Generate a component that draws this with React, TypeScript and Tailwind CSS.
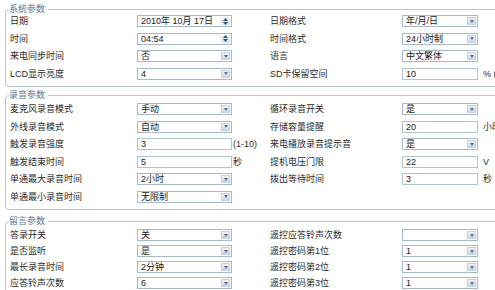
import React from 'react';

type Ctl = { kind: 'select' | 'spin' | 'text'; value: string; suffix?: string };
type Field = { label: string; ctl: Ctl };

const sel = (value: string): Ctl => ({ kind: 'select', value });
const txt = (value: string, suffix?: string): Ctl => ({ kind: 'text', value, suffix });

const sections: { title: string; gap: string; box: string; left: Field[]; right: Field[] }[] = [
    {
        title: '系统参数',
        gap: 'gap-[5.5px]',
        box: 'mt-[4px] pt-[1px] pb-[6.5px]',
        left: [
            { label: '日期', ctl: { kind: 'spin', value: '2010年 10月 17日' } },
            { label: '时间', ctl: { kind: 'spin', value: '04:54' } },
            { label: '来电同步时间', ctl: sel('否') },
            { label: 'LCD显示亮度', ctl: sel('4') },
        ],
        right: [
            { label: '日期格式', ctl: sel('年/月/日') },
            { label: '时间格式', ctl: sel('24小时制') },
            { label: '语言', ctl: sel('中文繁体') },
            { label: 'SD卡保留空间', ctl: txt('10', '% (最大50%)') },
        ],
    },
    {
        title: '录音参数',
        gap: 'gap-[5.5px]',
        box: 'mt-[3px] pt-[3px] pb-[6.5px]',
        left: [
            { label: '麦克风录音模式', ctl: sel('手动') },
            { label: '外线录音模式', ctl: sel('自动') },
            { label: '触发录音强度', ctl: txt('3', '(1-10)') },
            { label: '触发结束时间', ctl: txt('5', '秒') },
            { label: '单通最大录音时间', ctl: sel('2小时') },
            { label: '单通最小录音时间', ctl: sel('无限制') },
        ],
        right: [
            { label: '循环录音开关', ctl: sel('是') },
            { label: '存储容量提醒', ctl: txt('20', '小时') },
            { label: '来电播放录音提示音', ctl: sel('是') },
            { label: '提机电压门限', ctl: txt('22', 'V') },
            { label: '拨出等待时间', ctl: txt('3', '秒') },
        ],
    },
    {
        title: '留言参数',
        gap: 'gap-[4px]',
        box: 'mt-[6px] pt-[3px] pb-[6px]',
        left: [
            { label: '答录开关', ctl: sel('关') },
            { label: '是否监听', ctl: sel('是') },
            { label: '最长录音时间', ctl: sel('2分钟') },
            { label: '应答铃声次数', ctl: sel('6') },
        ],
        right: [
            { label: '遥控应答铃声次数', ctl: sel('') },
            { label: '遥控密码第1位', ctl: sel('1') },
            { label: '遥控密码第2位', ctl: sel('1') },
            { label: '遥控密码第3位', ctl: sel('1') },
        ],
    },
];

function Control({ ctl, width }: { ctl: Ctl; width: string }) {
    const border = ctl.kind === 'text' ? 'border-[#b3c2d0]' : 'border-[#a6b9cc]';
    return (
        <div className={`${width} h-[12px] shrink-0 flex items-stretch bg-white border ${border}`}>
            <span className="flex-1 pl-[3px] leading-[10px] text-[#1a1a1a] whitespace-nowrap overflow-hidden">
                {ctl.value}
            </span>
            {ctl.kind === 'select' && (
                <span className="w-[9px] my-[1px] mr-[1px] flex items-center justify-center bg-gradient-to-b from-[#eef3fa] to-[#c9d8ea] border border-[#c3d2e3]">
                    <svg width="4" height="3" viewBox="0 0 4 3">
                        <path d="M0 0 L4 0 L2 3 Z" fill="#5b6f88" />
                    </svg>
                </span>
            )}
            {ctl.kind === 'spin' && (
                <span className="w-[9px] my-[1px] mr-[1px] flex flex-col items-center justify-center gap-[1px] bg-gradient-to-b from-[#f3f6fa] to-[#dbe4ef]">
                    <svg width="5" height="3" viewBox="0 0 5 3">
                        <path d="M0 3 L5 3 L2.5 0 Z" fill="#2f4f7f" />
                    </svg>
                    <svg width="5" height="3" viewBox="0 0 5 3">
                        <path d="M0 0 L5 0 L2.5 3 Z" fill="#2f4f7f" />
                    </svg>
                </span>
            )}
        </div>
    );
}

function Row({ field, side }: { field?: Field; side: 'left' | 'right' }) {
    const isLeft = side === 'left';
    return (
        <div className={`${isLeft ? 'w-[260px]' : 'w-[250px]'} h-[12px] flex items-center shrink-0`}>
            {field && (
                <>
                    <span className={`${isLeft ? 'w-[127px]' : 'w-[132px]'} shrink-0 text-[#2b2b2b] whitespace-nowrap`}>
                        {field.label}
                    </span>
                    <Control ctl={field.ctl} width={isLeft ? 'w-[95px]' : 'w-[76px]'} />
                    {field.ctl.suffix && (
                        <span className={`${isLeft ? 'ml-[1px]' : 'ml-[5px]'} text-[#2b2b2b] whitespace-nowrap`}>
                            {field.ctl.suffix}
                        </span>
                    )}
                </>
            )}
        </div>
    );
}

export default function App() {
    return (
        <div
            className="w-[495px] h-[290px] overflow-hidden bg-white text-[9px] leading-[12px]"
            style={{ fontFamily: '"Liberation Sans", "Noto Sans CJK SC", sans-serif' }}
        >
            {sections.map((s) => {
                const n = Math.max(s.left.length, s.right.length);
                return (
                    <fieldset
                        key={s.title}
                        className={`ml-[5px] w-[540px] border border-[#b5c6d7] rounded-[4px] pl-[4px] ${s.box}`}
                    >
                        <legend className="-ml-[1px] pr-[3px] text-[9px] leading-[10px] text-[#5c7592]">{s.title}</legend>
                        <div className={`flex flex-col ${s.gap}`}>
                            {Array.from({ length: n }).map((_, i) => (
                                <div key={i} className="flex">
                                    <Row field={s.left[i]} side="left" />
                                    <Row field={s.right[i]} side="right" />
                                </div>
                            ))}
                        </div>
                    </fieldset>
                );
            })}
        </div>
    );
}
